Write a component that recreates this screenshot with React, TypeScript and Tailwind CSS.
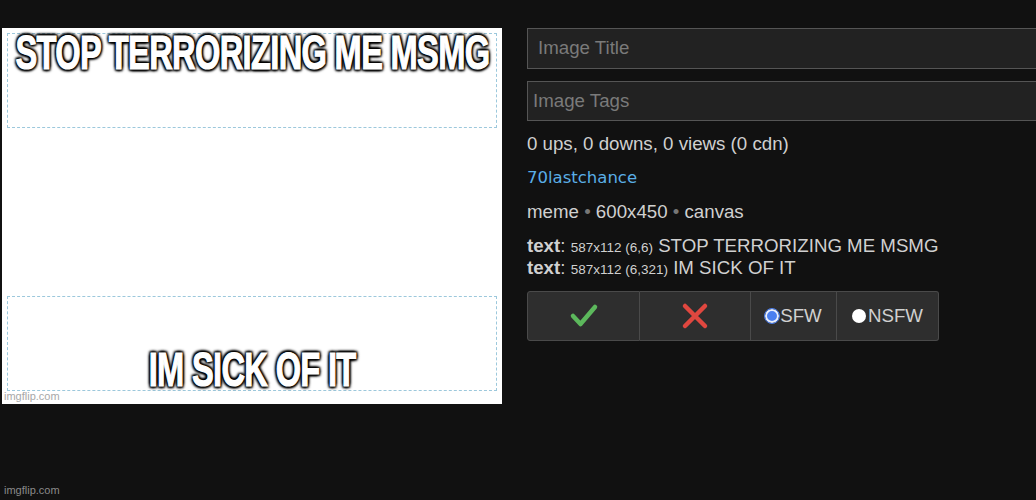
const memeText =
  "inline-block text-white font-bold text-[48px] leading-[54px] tracking-[-1px] scale-x-[0.68] origin-center whitespace-nowrap [-webkit-text-stroke:1.2px_#fff] [text-shadow:0_0_3px_#000,0_0_3px_#000,0_0_4px_#000,2px_2px_3px_#000,-2px_-2px_3px_#000,2px_-2px_3px_#000,-2px_2px_3px_#000]";

function CheckIcon() {
  return (
    <svg width="30" height="26" viewBox="0 0 30 26" fill="none">
      <path d="M4 13 L11.5 21 L26 4" stroke="#5cb85c" strokeWidth="4.5" strokeLinecap="round" strokeLinejoin="round" />
    </svg>
  );
}

function CrossIcon() {
  return (
    <svg width="28" height="28" viewBox="0 0 28 28" fill="none">
      <path d="M4 4 L24 24 M24 4 L4 24" stroke="#e0473f" strokeWidth="4.5" strokeLinecap="round" />
    </svg>
  );
}

export default function App() {
  return (
    <div className="w-[1036px] h-[500px] overflow-hidden bg-[#111111] relative font-['Liberation_Sans',Arial,sans-serif]">
      <div className="flex pt-[28px]">
        {/* meme canvas */}
        <div className="ml-[2px] w-[500px] h-[376px] bg-white relative shrink-0">
          <div className="absolute left-[5px] top-[5px] w-[490px] h-[95px] border border-dashed border-[#9cc8dc]" />
          <div className="absolute left-[5px] top-[268px] w-[490px] h-[95px] border border-dashed border-[#9cc8dc]" />
          <div className="absolute left-0 right-0 top-[-2px] flex justify-center">
            <span className={memeText}>STOP TERRORIZING ME MSMG</span>
          </div>
          <div className="absolute left-0 right-0 top-[315px] flex justify-center">
            <span className={memeText}>IM SICK OF IT</span>
          </div>
          <span className="absolute left-[2px] bottom-[1px] text-[11px] leading-[13px] text-[#a8a8a8]">imgflip.com</span>
        </div>

        {/* info panel */}
        <div className="ml-[25px] flex flex-col text-[#d0d0d0] text-[18.7px]">
          <div className="w-[540px] h-[41px] bg-[#222222] border border-[#555555] flex items-center pl-[10px] text-[#7a7a7a]">
            Image Title
          </div>
          <div className="mt-[12px] w-[540px] h-[40px] bg-[#222222] border border-[#555555] flex items-center pl-[5px] text-[#7a7a7a]">
            Image Tags
          </div>
          <div className="mt-[12px] h-[22px] leading-[22px]">0 ups, 0 downs, 0 views (0 cdn)</div>
          <div className="mt-[12px] h-[22px] leading-[22px] text-[16.5px] text-[#5aaee6] font-['DejaVu_Sans',Verdana,sans-serif]">
            70lastchance
          </div>
          <div className="mt-[12px] h-[22px] leading-[22px]">
            meme <span className="text-[#777777]">•</span> 600x450 <span className="text-[#777777]">•</span> canvas
          </div>
          <div className="mt-[12px] h-[22px] leading-[22px] whitespace-nowrap">
            <span className="font-bold">text</span>: <span className="text-[13.5px] leading-none">587x112 (6,6)</span> STOP TERRORIZING ME MSMG
          </div>
          <div className="h-[22px] leading-[22px] whitespace-nowrap">
            <span className="font-bold">text</span>: <span className="text-[13.5px] leading-none">587x112 (6,321)</span> IM SICK OF IT
          </div>
          <div className="mt-[12px] flex h-[50px]">
            <button className="w-[113px] h-full bg-[#2e2e2e] border border-[#4a4a4a] rounded-l-[3px] flex items-center justify-center">
              <CheckIcon />
            </button>
            <button className="w-[111px] h-full bg-[#2e2e2e] border border-l-0 border-[#4a4a4a] flex items-center justify-center">
              <CrossIcon />
            </button>
            <label className="w-[86px] h-full bg-[#2e2e2e] border border-l-0 border-[#4a4a4a] flex items-center justify-center text-[18.7px] text-[#d0d0d0]">
              <span className="w-[14px] h-[14px] rounded-full bg-[#4a7ff0] border-[2px] border-[#e8eefc] outline outline-1 outline-[#4a7ff0] mr-[1px]" />
              SFW
            </label>
            <label className="w-[102px] h-full bg-[#2e2e2e] border border-l-0 border-[#4a4a4a] rounded-r-[3px] flex items-center justify-center text-[18.7px] text-[#d0d0d0]">
              <span className="w-[14px] h-[14px] rounded-full bg-white mr-[2px]" />
              NSFW
            </label>
          </div>
        </div>
      </div>
      <span className="absolute left-[4px] top-[484px] text-[11px] leading-[13px] text-[#8a8a8a]">imgflip.com</span>
    </div>
  );
}
